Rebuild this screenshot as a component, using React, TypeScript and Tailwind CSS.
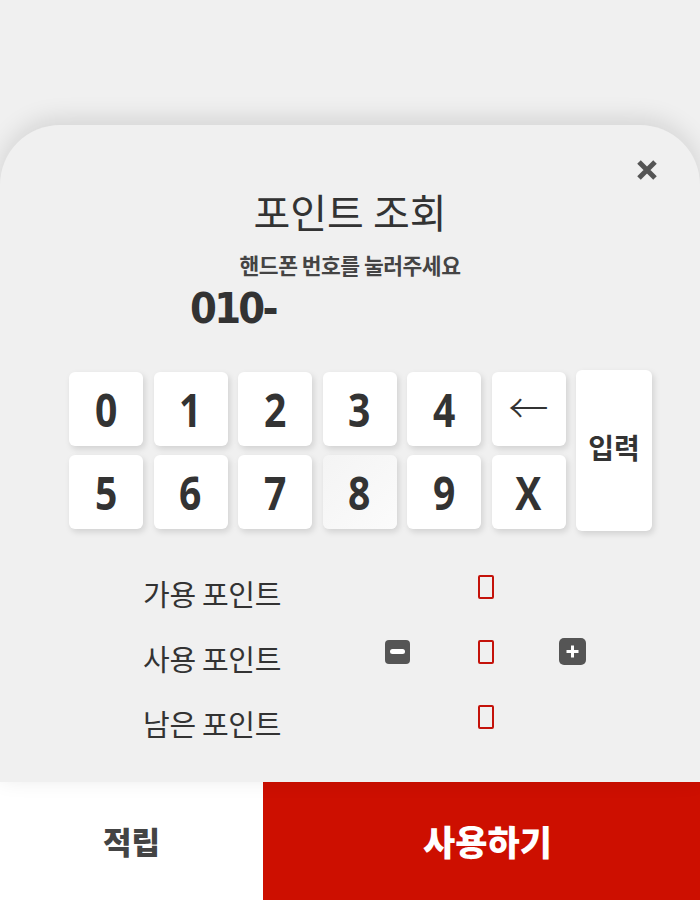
import { Fragment, useState } from 'react';

const KEYS = ['0', '1', '2', '3', '4', '←', '5', '6', '7', '8', '9', 'X'];

const ROWS = [
  { label: '가용 포인트', stepper: false },
  { label: '사용 포인트', stepper: true },
  { label: '남은 포인트', stepper: false },
];

export default function App() {
  const [phone, setPhone] = useState('010-');

  const press = (k: string) => {
    if (k === '←') setPhone((p) => (p.length > 4 ? p.slice(0, -1) : p));
    else if (k === 'X') setPhone('010-');
    else setPhone((p) => p + k);
  };

  return (
    <div className="min-h-[900px] flex flex-col bg-[#f0f0f0] font-['Noto_Sans_CJK_KR','Noto_Sans',sans-serif] text-[#333]">
      <div className="h-[125px] shrink-0" />

      {/* Card */}
      <div className="relative flex-1 flex flex-col items-center rounded-t-[60px] bg-[#f0f0f0] shadow-[0_-6px_24px_rgba(0,0,0,0.12)]">
        <button className="absolute right-[40px] top-[32px] w-[26px] h-[26px] flex items-center justify-center" aria-label="close">
          <svg width="22" height="22" viewBox="0 0 22 22">
            <path d="M3 3 L19 19 M19 3 L3 19" stroke="#555" strokeWidth="5" strokeLinecap="butt" />
          </svg>
        </button>

        <h1 className="mt-[60px] text-[40px] leading-[52px] font-normal text-[#333]">포인트 조회</h1>
        <p className="mt-[14px] text-[21.5px] leading-[28px] font-bold text-[#444] tracking-[-0.5px]">핸드폰 번호를 눌러주세요</p>

        <div className="self-start ml-[190px] mt-[10px] h-[40px] text-[42px] leading-[40px] font-bold text-[#333] font-['DejaVu_Sans',sans-serif] tracking-[-3px]">
          <span className="inline-block scale-x-[0.92] origin-left">{phone}</span>
        </div>

        {/* Keypad */}
        <div className="self-start ml-[69px] mt-[43px] grid grid-cols-[repeat(6,74px)_76px] grid-rows-[74px_74px] gap-x-[10.5px] gap-y-[9px]">
          {KEYS.map((k, i) => (
            <Fragment key={k}>
              <button
                onClick={() => press(k)}
                className={
                  'rounded-[6px] shadow-[2px_3px_6px_rgba(0,0,0,0.13)] flex items-center justify-center text-[#333] ' +
                  (k === '8' ? 'bg-gradient-to-br from-[#f4f4f4] to-[#fbfbfb]' : 'bg-white')
                }
              >
                {k === '←' ? (
                  <span className="text-[40px] leading-none font-['Noto_Sans_CJK_KR',sans-serif] font-light -mt-[6px]">{k}</span>
                ) : (
                  <span className="inline-block text-[46px] leading-none font-bold font-['Open_Sans',sans-serif] scale-x-[0.85]">{k}</span>
                )}
              </button>
              {i === 5 && (
                <button className="row-span-2 -my-[2px] rounded-[6px] bg-white shadow-[2px_3px_6px_rgba(0,0,0,0.13)] flex items-center justify-center text-[#333]">
                  <span className="-mt-[8px] text-[28px] leading-none font-bold">입력</span>
                </button>
              )}
            </Fragment>
          ))}
        </div>

        {/* Points */}
        <div className="self-start ml-[143px] mt-[25px] flex flex-col">
          {ROWS.map((r) => (
            <div key={r.label} className="h-[65px] flex items-center">
              <span className="w-[242px] mt-[12px] text-[29px] leading-[34px] text-[#333] tracking-[-0.3px]">{r.label}</span>
              <div className="w-[93px] flex">
                {r.stepper && (
                  <button className="w-[25px] h-[24px] rounded-[4px] bg-[#555] flex items-center justify-center" aria-label="minus">
                    <span className="w-[15px] h-[5px] rounded-full bg-white" />
                  </button>
                )}
              </div>
              <div className="w-[81px] flex">
                <span className="w-[16px] h-[24px] border-2 border-[#c4120a] rounded-[2px] text-transparent text-[10px] leading-none overflow-hidden">0</span>
              </div>
              {r.stepper && (
                <button className="w-[27px] h-[27px] rounded-[5px] bg-[#555] flex items-center justify-center" aria-label="plus">
                  <svg width="15" height="15" viewBox="0 0 15 15">
                    <path d="M7.5 1.5 V13.5 M1.5 7.5 H13.5" stroke="#fff" strokeWidth="3" />
                  </svg>
                </button>
              )}
            </div>
          ))}
        </div>
      </div>

      {/* Bottom actions */}
      <div className="h-[118px] shrink-0 flex">
        <button className="w-[263px] bg-white flex items-center justify-center text-[31px] font-black text-[#444]">적립</button>
        <button className="flex-1 bg-[#cd0f00] flex items-center justify-center text-[35px] font-black text-white pl-[12px]">사용하기</button>
      </div>
    </div>
  );
}
